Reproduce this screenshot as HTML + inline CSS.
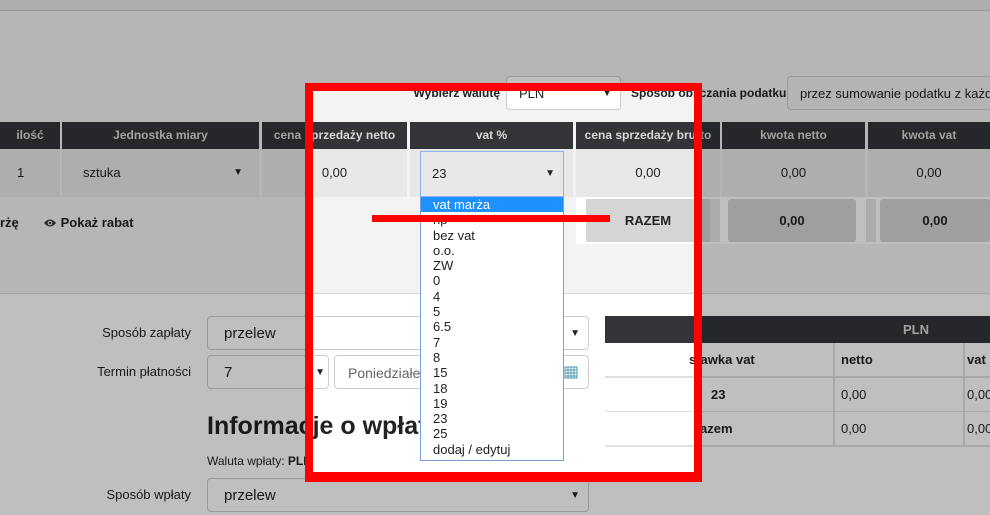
<!DOCTYPE html>
<html><head><meta charset="utf-8"><style>
*{margin:0;padding:0;box-sizing:border-box}
body{width:990px;height:515px;overflow:hidden;position:relative;background:#fff;font-family:"Liberation Sans",Arial,sans-serif;color:#222}
.a{position:absolute}
.top{left:0;top:0;width:990px;height:293px;background:#f3f3f3}
.hd{background:#333438;color:#d8d8d8;font-weight:bold;font-size:12px;text-align:center;line-height:27px;top:122px;height:27px;white-space:nowrap;overflow:hidden}
.cell{background:#e8e8e8;top:149px;height:48px;font-size:13px;text-align:center;line-height:48px}
.sel{background:#fff;border:1px solid #ccc;border-radius:4px;font-size:15px}
.arr{position:absolute;right:8px;font-size:10px}
.lbl{font-size:13px;text-align:right;width:191px;left:0}
.dd div{height:15.3px;line-height:15.3px;padding-left:12px;font-size:13px}
.rt{font-size:13px;line-height:33px;background:#fff;border-bottom:2px solid #e0e0e0;border-right:2px solid #e0e0e0;height:35px}
.ov{position:absolute;background:rgba(0,0,0,0.25)}
.red{position:absolute;background:#f00}
</style></head><body>
<div class="a top"></div>
<div class="a" style="left:0;top:0;width:990px;height:11px;background:#e9e9e9;border-bottom:1px solid #c8c8c8"></div>
<div class="a" style="left:0;top:293px;width:990px;height:1px;background:#d8d8d8"></div>

<div class="a" style="left:380px;top:86px;width:120px;text-align:right;font-size:12px;font-weight:bold">Wybierz walutę</div>
<div class="a sel" style="left:506px;top:76px;width:115px;height:34px;line-height:34px;padding-left:12px;font-size:13px">PLN<span class="arr">▼</span></div>
<div class="a" style="left:631px;top:86px;font-size:12px;font-weight:bold">Sposób obliczania podatku</div>
<div class="a sel" style="left:787px;top:76px;width:230px;height:34px;line-height:34px;padding-left:12px;font-size:13px;background:#f0f0f0;white-space:nowrap;overflow:hidden">przez sumowanie podatku z każdej</div>

<div class="a hd" style="left:0;width:60px">ilość</div>
<div class="a hd" style="left:62px;width:197px">Jednostka miary</div>
<div class="a hd" style="left:262px;width:145px">cena sprzedaży netto</div>
<div class="a hd" style="left:410px;width:163px">vat %</div>
<div class="a hd" style="left:576px;width:144px">cena sprzedaży brutto</div>
<div class="a hd" style="left:722px;width:143px">kwota netto</div>
<div class="a hd" style="left:868px;width:122px">kwota vat</div>

<div class="a cell" style="left:0;width:60px;text-align:left;padding-left:17px">1</div>
<div class="a cell" style="left:62px;width:197px;text-align:left;padding-left:21px">sztuka<span class="arr" style="right:16px">▼</span></div>
<div class="a cell" style="left:262px;width:145px">0,00</div>
<div class="a cell" style="left:410px;width:163px"></div>
<div class="a" style="left:420px;top:151px;width:144px;height:46px;border:1px solid #8fb0e8;background:#e8e8e8;font-size:13px;line-height:44px;padding-left:11px">23<span class="arr">▼</span></div>
<div class="a cell" style="left:576px;width:144px">0,00</div>
<div class="a cell" style="left:722px;width:143px">0,00</div>
<div class="a cell" style="left:868px;width:122px">0,00</div>

<div class="a" style="left:0;top:215px;font-size:13px;font-weight:bold">rżę</div>
<div class="a" style="left:43px;top:215px;font-size:13px;font-weight:bold"><svg width="14" height="10" viewBox="0 0 14 10" style="vertical-align:-1px"><path d="M1 5Q7-2 13 5Q7 12 1 5Z" fill="#333"/><circle cx="7" cy="5" r="2.3" fill="#fff"/><circle cx="7" cy="5" r="1.3" fill="#333"/></svg> Pokaż rabat</div>
<div class="a" style="left:576px;top:197px;width:414px;height:47px;background:#fff"></div>
<div class="a" style="left:586px;top:199px;width:124px;height:43px;background:#d5d5d5;font-size:13px;font-weight:bold;text-align:center;line-height:43px">RAZEM</div>
<div class="a" style="left:710px;top:199px;width:10px;height:43px;background:#e6e6e6"></div>
<div class="a" style="left:728px;top:199px;width:128px;height:43px;background:#d5d5d5;font-size:13px;font-weight:bold;text-align:center;line-height:43px;border-radius:3px">0,00</div>
<div class="a" style="left:866px;top:199px;width:10px;height:43px;background:#e6e6e6"></div>
<div class="a" style="left:880px;top:199px;width:110px;height:43px;background:#d5d5d5;font-size:13px;font-weight:bold;text-align:center;line-height:43px;border-radius:3px">0,00</div>

<div class="a lbl" style="top:325px">Sposób zapłaty</div>
<div class="a sel" style="left:207px;top:316px;width:382px;height:34px;line-height:34px;padding-left:16px">przelew<span class="arr">▼</span></div>
<div class="a lbl" style="top:364px">Termin płatności</div>
<div class="a sel" style="left:207px;top:355px;width:122px;height:34px;line-height:34px;padding-left:16px">7<span class="arr" style="right:3px">▼</span></div>
<div class="a sel" style="left:334px;top:355px;width:255px;height:34px;line-height:34px;padding-left:13px;color:#666;font-size:14px;overflow:hidden">Poniedziałek, 06.06.2016
<svg class="arr" style="right:10px;top:9px" width="14" height="14" viewBox="0 0 14 14"><rect x="1" y="2" width="12" height="11" fill="#fff" stroke="#4a9ab0"/><path d="M1 5H13M1 8H13M1 11H13M4 2V13M7 2V13M10 2V13" stroke="#4a9ab0"/></svg></div>
<div class="a" style="left:207px;top:412px;font-size:25px;font-weight:bold;white-space:nowrap">Informacje o wpłatach</div>
<div class="a" style="left:207px;top:454px;font-size:12px">Waluta wpłaty: <b>PLN</b></div>
<div class="a lbl" style="top:487px">Sposób wpłaty</div>
<div class="a sel" style="left:207px;top:478px;width:382px;height:34px;line-height:34px;padding-left:16px">przelew<span class="arr">▼</span></div>

<div class="a" style="left:605px;top:316px;width:385px;height:27px;background:#333438;color:#d8d8d8;font-size:13px;font-weight:bold;line-height:27px;padding-left:298px">PLN</div>
<div class="a" style="left:605px;top:343px;width:385px;height:103px;background:#fff;border-left:1px solid #e0e0e0"></div>
<div class="a rt" style="left:605px;top:343px;width:230px;font-weight:bold;padding-left:84px">stawka vat</div>
<div class="a rt" style="left:835px;top:343px;width:130px;font-weight:bold;padding-left:6px">netto</div>
<div class="a rt" style="left:965px;top:343px;width:30px;font-weight:bold;padding-left:2px">vat</div>
<div class="a rt" style="left:605px;top:378px;width:230px;font-weight:bold;padding-left:106px">23</div>
<div class="a rt" style="left:835px;top:378px;width:130px;padding-left:6px">0,00</div>
<div class="a rt" style="left:965px;top:378px;width:30px;padding-left:2px">0,00</div>
<div class="a rt" style="left:605px;top:412px;width:230px;font-weight:bold;padding-left:90px">razem</div>
<div class="a rt" style="left:835px;top:412px;width:130px;padding-left:6px">0,00</div>
<div class="a rt" style="left:965px;top:412px;width:30px;padding-left:2px">0,00</div>

<div class="a dd" style="left:420px;top:197px;width:144px;height:264px;background:#fff;border:1px solid #7a9fdc;border-top:none">
<div style="background:#1e90ff;color:#fff;padding-left:12px">vat marża</div>
<div>np</div><div>bez vat</div><div>o.o.</div><div>ZW</div><div>0</div><div>4</div><div>5</div><div>6.5</div><div>7</div><div>8</div><div>15</div><div>18</div><div>19</div><div>23</div><div>25</div><div>dodaj / edytuj</div>
</div>

<div class="ov" style="left:0;top:0;width:990px;height:83px"></div>
<div class="ov" style="left:0;top:482px;width:990px;height:33px"></div>
<div class="ov" style="left:0;top:83px;width:305px;height:399px"></div>
<div class="ov" style="left:702px;top:83px;width:288px;height:399px"></div>

<div class="red" style="left:305px;top:83px;width:397px;height:8px"></div>
<div class="red" style="left:305px;top:472px;width:397px;height:10px"></div>
<div class="red" style="left:305px;top:83px;width:8px;height:399px"></div>
<div class="red" style="left:694px;top:83px;width:8px;height:399px"></div>
<div class="red" style="left:372px;top:215px;width:238px;height:7px"></div>
</body></html>
